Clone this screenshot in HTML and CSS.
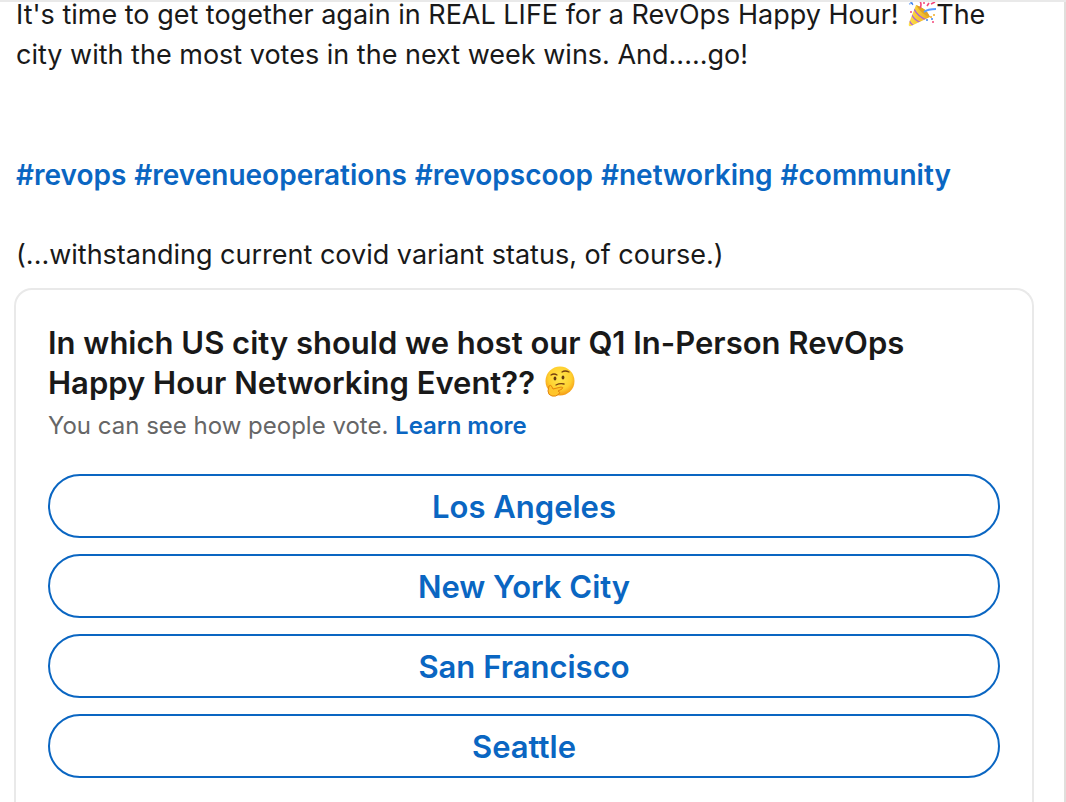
FILE: index.html
```html
<!DOCTYPE html>
<html lang="en">
<head>
  <meta charset="UTF-8" />
  <title>RevOps Happy Hour</title>
  <link rel="stylesheet" href="styles.css">
</head>
<body>

  <main class="post">
    <div class="post-text">
      <p>It's time to get together again in REAL LIFE for a RevOps Happy Hour! <svg class="party" viewBox="0 0 28 28" role="img" aria-label="party popper">
        <defs>
          <linearGradient id="cone" x1="0" y1="0" x2="1" y2="0">
            <stop offset="0" stop-color="#ffe14a" />
            <stop offset="1" stop-color="#e9a91c" />
          </linearGradient>
          <clipPath id="coneClip"><path d="M8 5 Q18 8 22 17 L3 26 Q0 27 1 23Z" /></clipPath>
        </defs>
        <path d="M8 5 Q18 8 22 17 L3 26 Q0 27 1 23Z" fill="url(#cone)" />
        <g clip-path="url(#coneClip)" stroke="#ac62d5" stroke-width="1.4" fill="none">
          <path d="M6 9 Q10 17 19 20M3.500 14.500 Q7 21 14 23M1 20 Q3 25 8 27" />
        </g>
        <path d="M8 5 Q18 8 22 17 Q14 15 8 5Z" fill="#dfa322" />
        <path d="M16 12 Q20 9 28 9" stroke="#5b9dff" stroke-width="2" fill="none" />
        <path d="M12 8 Q14 5 12 1M19 6l2-3M23 4l4-2" stroke="#f3477a" stroke-width="1.6" fill="none" />
        <path d="M1 4l4-1M2 1l3 4" stroke="#3d83ef" stroke-width="1.2" />
        <g fill="#f3477a"><circle cx="3" cy="12" r="1" /><circle cx="16" cy="3" r="1" /><circle cx="25" cy="22" r="1" /></g>
        <g fill="#3d83ef"><circle cx="19" cy="20" r="1" /><circle cx="24" cy="19" r="1" /></g>
        <g fill="#efad28"><circle cx="26" cy="15" r="1" /><circle cx="23" cy="17" r="1" /></g>
      </svg>The city with the most votes in the next week wins. And.....go!</p>
      <p class="tags">
        <a href="#">#revops</a>
        <a href="#">#revenueoperations</a>
        <a href="#">#revopscoop</a>
        <a href="#">#networking</a>
        <a href="#">#community</a>
      </p>
      <p>(...withstanding current covid variant status, of course.)</p>
    </div>

    <section class="poll">
      <h2>In which US city should we host our Q1 In-Person RevOps Happy Hour Networking Event?? <svg class="thinking" viewBox="0 0 32 32" role="img" aria-label="thinking face">
        <defs>
          <radialGradient id="face" cx="50%" cy="40%" r="60%">
            <stop offset="0" stop-color="#ffe64f" />
            <stop offset="0.65" stop-color="#ffd130" />
            <stop offset="1" stop-color="#f49a16" />
          </radialGradient>
        </defs>
        <circle cx="17" cy="15" r="14.5" fill="url(#face)" />
        <g fill="none" stroke="#784210" stroke-width="1.3" stroke-linecap="round">
          <path d="M8 9 Q11 7 14 9" />
          <path d="M19 6 Q22 4 26 6" />
          <path d="M13 19 Q17 17 21 18" />
        </g>
        <ellipse cx="12" cy="12.500" rx="1.4" ry="1.9" fill="#64390f" />
        <ellipse cx="20" cy="11.500" rx="1.4" ry="1.9" fill="#64390f" />
        <path d="M6 20 Q8 18 9 21 L10 23 L18 21 Q21 21 19 23 L15 25 Q18 26 16 28 Q13 31 9 30 Q5 29 5 25Z" fill="#ffc52b" stroke="#e5860d" stroke-width="1" />
      </svg></h2>
      <p class="poll-note">You can see how people vote. <a href="#">Learn more</a></p>
      <div class="options">
        <button type="button">Los Angeles</button>
        <button type="button">New York City</button>
        <button type="button">San Francisco</button>
        <button type="button">Seattle</button>
      </div>
    </section>
  </main>

</body>
</html>
```

FILE: styles.css
```css
* {
  box-sizing: border-box;
}

body {
  margin: 0;
  height: 100vh;
  overflow: hidden;
  display: flex;
  flex-direction: column;
  background-color: white;
  border-top: 2px solid #e9e9e9;
  font-family: Inter, "Liberation Sans", sans-serif;
  color: #191919;
}

h2, p {
  margin: 0;
}

a {
  color: #0a66c2;
  font-weight: 600;
  text-decoration: none;
}

.post {
  flex: 1;
  min-height: 0;
  display: flex;
  flex-direction: column;
  padding: 0 30px 0 14px;
  border-right: 2px solid #e0dfdc;
}

.post-text {
  margin-top: -7px;
  padding: 0 2px;
  font-size: 27px;
  line-height: 40px;
}

.post-text .tags {
  margin: 80px 0 40px;
  font-size: 28px;
}

.party {
  width: 28px;
  height: 28px;
  margin-left: 2px;
  vertical-align: -4px;
}

.poll {
  flex: 1;
  margin-top: 13px;
  padding: 33px 32px 0;
  border: 2px solid #e9e9e9;
  border-bottom: none;
  border-radius: 18px 18px 0 0;
}

.poll h2 {
  font-size: 31px;
  font-weight: 600;
  line-height: 40px;
}

.thinking {
  width: 32px;
  height: 32px;
  vertical-align: -4px;
}

.poll-note {
  margin-top: 7px;
  font-size: 24px;
  line-height: 32px;
  color: #666;
}

.options {
  display: flex;
  flex-direction: column;
  gap: 16px;
  margin-top: 32px;
}

.options button {
  height: 64px;
  border: 2px solid #0a66c2;
  border-radius: 32px;
  background-color: white;
  color: #0a66c2;
  font-family: inherit;
  font-size: 31px;
  font-weight: 600;
  cursor: pointer;
}
```
